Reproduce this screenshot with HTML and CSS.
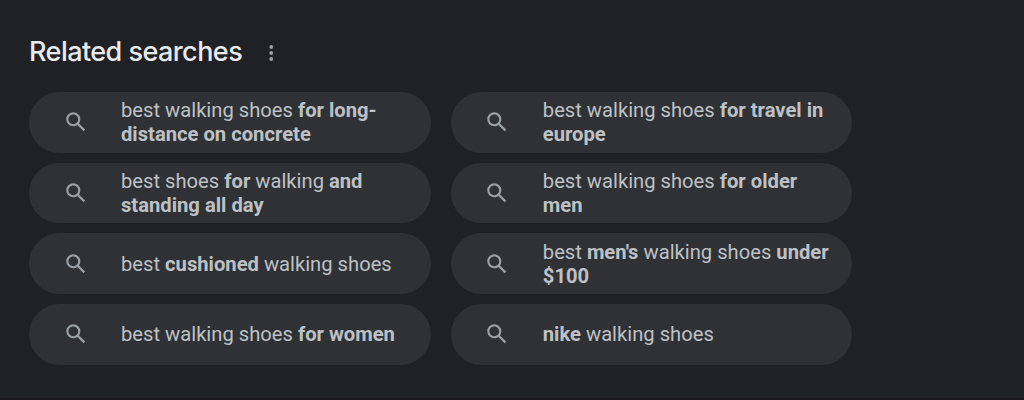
FILE: index.html
```html
<!DOCTYPE html>
<html lang="en">
<head>
<meta charset="utf-8">
<title>Related searches</title>
<link rel="stylesheet" href="styles.css">
</head>
<body>
<svg class="defs" aria-hidden="true"><symbol id="search" viewBox="0 0 24 24"><path d="M20.49 19l-5.73-5.73C15.53 12.2 16 10.91 16 9.500A6.500 6.500 0 1 0 9.500 16c1.410 0 2.700-.47 3.770-1.240L19 20.490 20.490 19zM5 9.500C5 7.010 7.010 5 9.500 5S14 7.010 14 9.500 11.990 14 9.500 14 5 11.990 5 9.500z"/></symbol></svg>
<main class="related">
<header class="heading"><h1>Related searches</h1>
<svg class="more" viewBox="0 0 4 16"><circle cx="2" cy="2" r="1.9"/><circle cx="2" cy="8" r="1.9"/><circle cx="2" cy="14" r="1.9"/></svg></header>
<div class="grid">
<a class="pill"><svg><use href="#search"/></svg><span>best walking shoes <b>for long-<br>distance on concrete</b></span></a>
<a class="pill"><svg><use href="#search"/></svg><span>best walking shoes <b>for travel in<br>europe</b></span></a>
<a class="pill"><svg><use href="#search"/></svg><span>best shoes <b>for</b> walking <b>and<br>standing all day</b></span></a>
<a class="pill"><svg><use href="#search"/></svg><span>best walking shoes <b>for older<br>men</b></span></a>
<a class="pill"><svg><use href="#search"/></svg><span>best <b>cushioned</b> walking shoes</span></a>
<a class="pill"><svg><use href="#search"/></svg><span>best <b>men's</b> walking shoes <b>under<br>$100</b></span></a>
<a class="pill"><svg><use href="#search"/></svg><span>best walking shoes <b>for women</b></span></a>
<a class="pill"><svg><use href="#search"/></svg><span><b>nike</b> walking shoes</span></a>
</div>
</main>
</body>
</html>
```
FILE: styles.css
```css
* { box-sizing: border-box; }
body { margin: 0; height: 400px; background: #202124; color: #bdc1c6; font-family: Roboto, sans-serif; border-bottom: 2px solid #1b191c; }
.defs { display: none; }
.related { padding: 34px 0 0 29px; }
.heading { display: flex; align-items: center; height: 36px; }
h1 { margin: 0; width: 240px; font: 500 27px/36px Inter, sans-serif; color: #e8eaed; letter-spacing: -0.55px; white-space: nowrap; }
.more { width: 4.5px; height: 16px; margin-top: 2px; fill: #9aa0a6; }
.grid { display: grid; grid-template-columns: 401.5px 401.5px; grid-auto-rows: 60.5px; gap: 10.2px 20.3px; margin-top: 22px; }
.pill { display: flex; align-items: center; padding: 0 0 0.2px 33.5px; border-radius: 31px; background: #303134; font-size: 20.2px; line-height: 24px; white-space: nowrap; }
.pill svg { width: 26px; height: 26px; margin-right: 32.5px; fill: #9aa0a6; }
b { font-weight: 700; }
```
